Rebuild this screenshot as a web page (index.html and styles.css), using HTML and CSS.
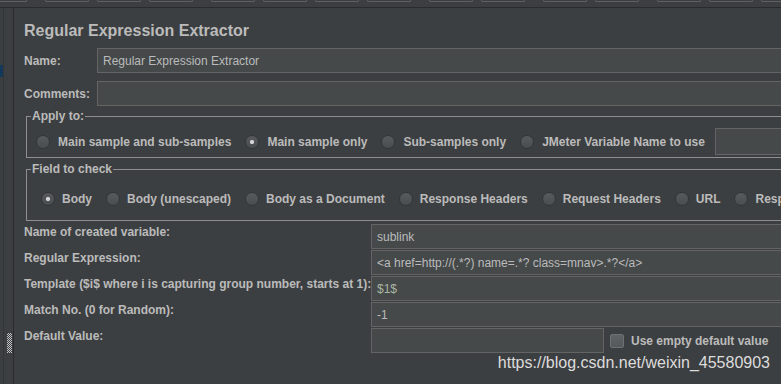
FILE: index.html
```html
<!DOCTYPE html>
<html lang="en">
<head>
    <meta charset="UTF-8">
    <meta name="viewport" content="width=device-width, initial-scale=1.0">
    <title>Regular Expression Extractor</title>
    <link rel="stylesheet" href="styles.css">
</head>
<body>
    <div class="toolbar">
        <span class="tb-btn first"></span>
        <span class="tb-btn sep"></span>
        <span class="tb-btn"></span>
        <span class="tb-btn"></span>
        <span class="tb-btn sep"></span>
        <span class="tb-btn"></span>
        <span class="tb-btn"></span>
        <span class="tb-btn"></span>
        <span class="tb-btn sep"></span>
        <span class="tb-btn"></span>
        <span class="tb-btn sep"></span>
        <span class="tb-btn"></span>
        <span class="tb-btn sep"></span>
        <span class="tb-btn"></span>
        <span class="tb-btn"></span>
    </div>

    <div class="workspace">
        <div class="tree"><div class="tree-sel"></div></div>
        <div class="divider"><div class="grip"></div></div>

        <div class="editor">
            <h1 class="title">Regular Expression Extractor</h1>

            <div class="row">
                <label class="label">Name:</label>
                <input class="field" type="text" value="Regular Expression Extractor">
            </div>
            <div class="row">
                <label class="label">Comments:</label>
                <input class="field" type="text" value="">
            </div>

            <fieldset class="group apply">
                <legend>Apply to:</legend>
                <div class="options">
                    <label class="option"><input type="radio" name="scope">Main sample and sub-samples</label>
                    <label class="option"><input type="radio" name="scope" checked>Main sample only</label>
                    <label class="option"><input type="radio" name="scope">Sub-samples only</label>
                    <label class="option"><input type="radio" name="scope">JMeter Variable Name to use</label>
                    <input class="field var-field" type="text" value="">
                </div>
            </fieldset>

            <fieldset class="group check">
                <legend>Field to check</legend>
                <div class="options">
                    <label class="option"><input type="radio" name="field" checked>Body</label>
                    <label class="option"><input type="radio" name="field">Body (unescaped)</label>
                    <label class="option"><input type="radio" name="field">Body as a Document</label>
                    <label class="option"><input type="radio" name="field">Response Headers</label>
                    <label class="option"><input type="radio" name="field">Request Headers</label>
                    <label class="option"><input type="radio" name="field">URL</label>
                    <label class="option"><input type="radio" name="field">Response Code</label>
                    <label class="option"><input type="radio" name="field">Response Message</label>
                </div>
            </fieldset>

            <div class="params">
                <div class="param">
                    <label class="param-label">Name of created variable:</label>
                    <input class="field" type="text" value="sublink">
                </div>
                <div class="param">
                    <label class="param-label">Regular Expression:</label>
                    <input class="field" type="text" value="<a href=http://(.*?) name=.*? class=mnav>.*?</a>">
                </div>
                <div class="param">
                    <label class="param-label">Template ($i$ where i is capturing group number, starts at 1):</label>
                    <input class="field template" type="text" value="$1$">
                </div>
                <div class="param">
                    <label class="param-label">Match No. (0 for Random):</label>
                    <input class="field" type="text" value="-1">
                </div>
                <div class="param">
                    <label class="param-label">Default Value:</label>
                    <input class="field default-field" type="text" value="">
                    <label class="check-option"><input type="checkbox">Use empty default value</label>
                </div>
            </div>
        </div>
    </div>

    <div class="watermark">https://blog.csdn.net/weixin_45580903</div>
</body>
</html>
```

FILE: styles.css
```css
body {
    margin: 0;
    width: 781px;
    height: 384px;
    overflow: hidden;
    position: relative;
    background-color: #3c3f41;
    color: #bbbbbb;
    font-family: "Liberation Sans", Arial, sans-serif;
    font-size: 12px;
}

/* top toolbar, only the lower edge of the buttons is visible */
.toolbar {
    display: flex;
    height: 7px;
    margin-left: -17px;
    border-bottom: 1px solid #2b2b2b;
}

.tb-btn {
    flex: none;
    width: 44px;
    height: 2px;
    margin-left: 8px;
    box-sizing: border-box;
    border: 1px solid #5e6164;
    border-top: none;
    border-radius: 0 0 3px 3px;
}

.tb-btn.first {
    margin-left: 0;
}

.tb-btn.sep {
    margin-left: 18px;
}

.workspace {
    display: flex;
    height: 376px;
}

.tree {
    flex: none;
    width: 3px;
    border-right: 1px solid #333537;
}

.tree-sel {
    margin-top: 57px;
    height: 12px;
    background-color: #12395a;
}

.divider {
    flex: none;
    width: 9px;
    border-right: 1px solid #2b2b2b;
}

.grip {
    width: 5px;
    height: 20px;
    margin: 325px 0 0 3px;
    background: repeating-conic-gradient(#c4c4c4 0 25%, transparent 0 50%) 0 0 / 2px 2px;
}

.editor {
    flex: none;
    width: 800px;
    padding-left: 10px;
}

.title {
    margin: 14px 0 2px;
    font-size: 16px;
    line-height: 18px;
    font-weight: bold;
}

.row {
    display: flex;
    height: 25px;
    margin-top: 8px;
}

.label {
    flex: none;
    width: 73px;
    align-self: center;
    line-height: 14px;
    font-weight: bold;
}

.field {
    flex: 1;
    min-width: 0;
    height: 25px;
    margin: 0;
    padding: 0 5px;
    box-sizing: border-box;
    background-color: #45494a;
    border: 1px solid #646464;
    color: #bbbbbb;
    font-family: "Liberation Sans", Arial, sans-serif;
    font-size: 12px;
    outline: none;
}

.group {
    min-width: 0;
    margin: 3px 0 0 2px;
    padding: 0;
    border: 1px solid #8e8e8e;
}

.group legend {
    margin-left: 4px;
    padding: 0 1px;
    line-height: 14px;
    font-weight: bold;
}

.options {
    display: flex;
    align-items: center;
    white-space: nowrap;
    font-weight: bold;
}

.apply .options {
    height: 27px;
    margin: 5px 0 2px;
    padding-left: 9px;
    gap: 14px;
}

.apply .option {
    gap: 8px;
}

.check {
    margin-top: 4px;
}

.check .options {
    height: 20px;
    margin: 13px 0 11px;
    padding-left: 14px;
    gap: 14px;
}

.check .option {
    gap: 7px;
}

.option {
    display: flex;
    align-items: center;
    line-height: 14px;
}

.var-field {
    height: 27px;
    margin-left: -4px;
}

input[type="radio"] {
    appearance: none;
    flex: none;
    width: 14px;
    height: 14px;
    margin: 0;
    box-sizing: border-box;
    border: 1px solid #333638;
    border-radius: 50%;
    background: linear-gradient(#585b5d, #4a4d4f);
}

input[type="radio"]:checked {
    background: radial-gradient(circle, #d4d4d4 0 1.8px, transparent 2.4px), linear-gradient(#585b5d, #4a4d4f);
}

.params {
    margin-top: 3px;
}

.param {
    display: flex;
    height: 25px;
    margin-bottom: 1px;
}

.param-label {
    flex: none;
    width: 347px;
    padding-top: 1px;
    line-height: 14px;
    font-weight: bold;
    white-space: nowrap;
}

.template {
    color: #a9b5a3;
}

.default-field {
    flex: none;
    width: 233px;
}

.check-option {
    display: flex;
    align-items: center;
    gap: 7px;
    margin-left: 6px;
    font-weight: bold;
}

input[type="checkbox"] {
    appearance: none;
    width: 14px;
    height: 14px;
    margin: 0;
    box-sizing: border-box;
    border: 1px solid #6e7173;
    border-radius: 2px;
    background: linear-gradient(#606365, #56595b);
}

.watermark {
    position: absolute;
    right: 11px;
    top: 354px;
    font-size: 16px;
    line-height: 18px;
    color: #dcdcdc;
}
```
